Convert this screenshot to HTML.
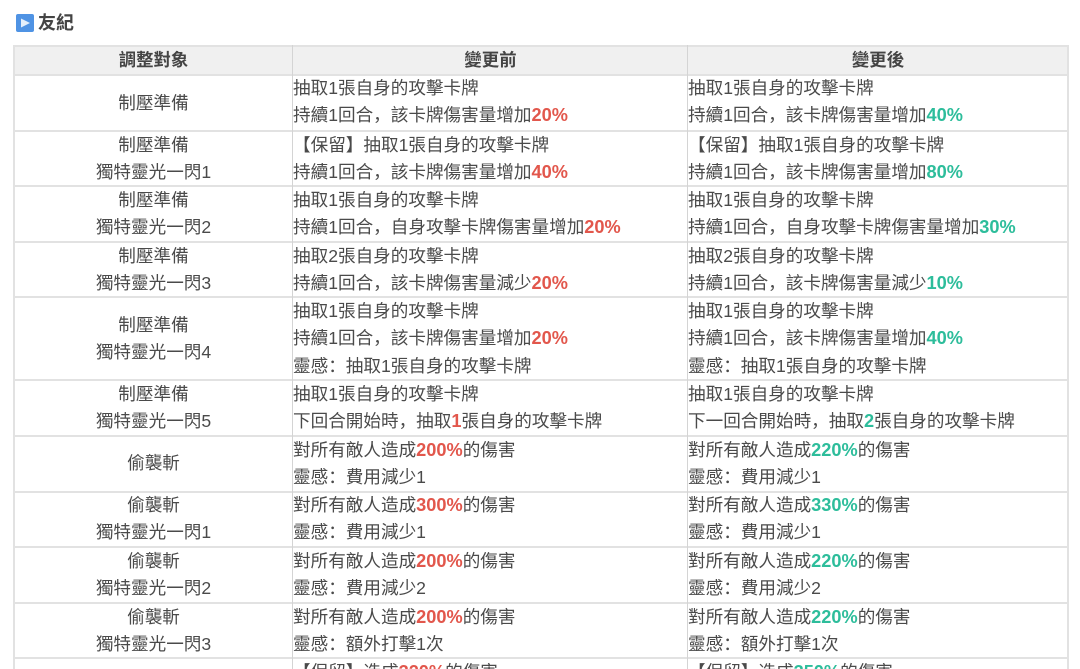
<!DOCTYPE html>
<html lang="zh-CN"><head><meta charset="utf-8"><title>友紀</title>
<style>
html,body{margin:0;padding:0;background:#fff;overflow:hidden}
body{width:1080px;height:669px;overflow:hidden;position:relative;font-family:"Liberation Sans","Noto Sans CJK SC",sans-serif;color:#4a4a4a;font-size:17.6px}
#w{position:absolute;left:0;top:0;width:1080px;height:669px;overflow:hidden;filter:blur(.3px)}
.h{position:absolute;left:14px;width:1054px;height:2px;background:#e2e2e2}
.v{position:absolute;top:45px;height:624px;width:2px;background:#e2e2e2}
.hd{position:absolute;left:15px;top:46px;width:1052px;height:28px;background:#f0f0f0}
.c{position:absolute;left:15px;width:277px;text-align:center;line-height:27.4px;white-space:nowrap}
.l,.r{position:absolute;line-height:27.4px;white-space:nowrap}
.l{left:293px}.r{left:688px}
.th{position:absolute;top:46px;line-height:28px;font-weight:bold;text-align:center;color:#444;font-size:17.4px}
b.o{color:#e2574c;font-size:18.2px}b.g{color:#2dbd9b;font-size:18.2px}
.t{position:absolute;left:38px;top:11px;font-size:18px;line-height:24px;font-weight:bold;color:#444}
</style></head><body><div id="w">
<svg style="position:absolute;left:16px;top:14px" width="19" height="19" viewBox="0 0 19 19"><rect width="18" height="18" rx="2" fill="#4f93e4"/><path d="M5 4.500L14 9L5 13.500Z" fill="#e4effb"/></svg>
<div class="t">友紀</div>
<div class="hd"></div>
<div class="h" style="top:45px"></div>
<div class="h" style="top:74px"></div>
<div class="h" style="top:130px"></div>
<div class="h" style="top:185px"></div>
<div class="h" style="top:241px"></div>
<div class="h" style="top:296px"></div>
<div class="h" style="top:379px"></div>
<div class="h" style="top:435px"></div>
<div class="h" style="top:491px"></div>
<div class="h" style="top:546px"></div>
<div class="h" style="top:602px"></div>
<div class="h" style="top:657px"></div>
<div class="v" style="left:13px"></div>
<div class="v" style="left:292px;width:1px;background:#d4d4d4"></div>
<div class="v" style="left:687px;width:1px;background:#d4d4d4"></div>
<div class="v" style="left:1067px"></div>
<div class="th" style="left:15px;width:277px">調整對象</div>
<div class="th" style="left:294px;width:393px">變更前</div>
<div class="th" style="left:689px;width:378px">變更後</div>

<div class="c" style="top:90px">制壓準備</div>
<div class="l" style="top:75px">抽取1張自身的攻擊卡牌<br>持續1回合，該卡牌傷害量增加<b class="o">20%</b></div>
<div class="r" style="top:75px">抽取1張自身的攻擊卡牌<br>持續1回合，該卡牌傷害量增加<b class="g">40%</b></div>

<div class="c" style="top:132px">制壓準備<br>獨特靈光一閃1</div>
<div class="l" style="top:132px">【保留】抽取1張自身的攻擊卡牌<br>持續1回合，該卡牌傷害量增加<b class="o">40%</b></div>
<div class="r" style="top:132px">【保留】抽取1張自身的攻擊卡牌<br>持續1回合，該卡牌傷害量增加<b class="g">80%</b></div>

<div class="c" style="top:187px">制壓準備<br>獨特靈光一閃2</div>
<div class="l" style="top:187px">抽取1張自身的攻擊卡牌<br>持續1回合，自身攻擊卡牌傷害量增加<b class="o">20%</b></div>
<div class="r" style="top:187px">抽取1張自身的攻擊卡牌<br>持續1回合，自身攻擊卡牌傷害量增加<b class="g">30%</b></div>

<div class="c" style="top:243px">制壓準備<br>獨特靈光一閃3</div>
<div class="l" style="top:243px">抽取2張自身的攻擊卡牌<br>持續1回合，該卡牌傷害量減少<b class="o">20%</b></div>
<div class="r" style="top:243px">抽取2張自身的攻擊卡牌<br>持續1回合，該卡牌傷害量減少<b class="g">10%</b></div>

<div class="c" style="top:312px">制壓準備<br>獨特靈光一閃4</div>
<div class="l" style="top:298px">抽取1張自身的攻擊卡牌<br>持續1回合，該卡牌傷害量增加<b class="o">20%</b><br>靈感：抽取1張自身的攻擊卡牌</div>
<div class="r" style="top:298px">抽取1張自身的攻擊卡牌<br>持續1回合，該卡牌傷害量增加<b class="g">40%</b><br>靈感：抽取1張自身的攻擊卡牌</div>

<div class="c" style="top:381px">制壓準備<br>獨特靈光一閃5</div>
<div class="l" style="top:381px">抽取1張自身的攻擊卡牌<br>下回合開始時，抽取<b class="o">1</b>張自身的攻擊卡牌</div>
<div class="r" style="top:381px">抽取1張自身的攻擊卡牌<br>下一回合開始時，抽取<b class="g">2</b>張自身的攻擊卡牌</div>

<div class="c" style="top:450px">偷襲斬</div>
<div class="l" style="top:437px">對所有敵人造成<b class="o">200%</b>的傷害<br>靈感：費用減少1</div>
<div class="r" style="top:437px">對所有敵人造成<b class="g">220%</b>的傷害<br>靈感：費用減少1</div>

<div class="c" style="top:492px">偷襲斬<br>獨特靈光一閃1</div>
<div class="l" style="top:492px">對所有敵人造成<b class="o">300%</b>的傷害<br>靈感：費用減少1</div>
<div class="r" style="top:492px">對所有敵人造成<b class="g">330%</b>的傷害<br>靈感：費用減少1</div>

<div class="c" style="top:548px">偷襲斬<br>獨特靈光一閃2</div>
<div class="l" style="top:548px">對所有敵人造成<b class="o">200%</b>的傷害<br>靈感：費用減少2</div>
<div class="r" style="top:548px">對所有敵人造成<b class="g">220%</b>的傷害<br>靈感：費用減少2</div>

<div class="c" style="top:604px">偷襲斬<br>獨特靈光一閃3</div>
<div class="l" style="top:604px">對所有敵人造成<b class="o">200%</b>的傷害<br>靈感：額外打擊1次</div>
<div class="r" style="top:604px">對所有敵人造成<b class="g">220%</b>的傷害<br>靈感：額外打擊1次</div>

<div class="l" style="top:659px">【保留】造成<b class="o">320%</b>的傷害</div>
<div class="r" style="top:659px">【保留】造成<b class="g">350%</b>的傷害</div>
</div></body></html>
